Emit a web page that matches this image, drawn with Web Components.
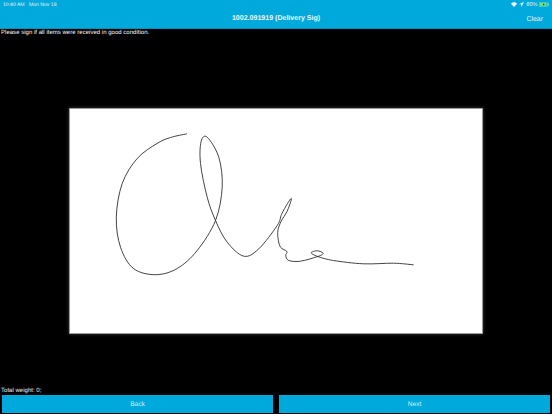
<!DOCTYPE html>
<html lang="en"><head><meta charset="utf-8"><title>Delivery Sig</title>
<style>html,body{margin:0;padding:0;background:#000}body{width:552px;height:414px;overflow:hidden;font-family:"Liberation Sans",Arial,sans-serif;text-rendering:geometricPrecision}</style>
</head><body>
<sig-screen title-text="1002.091919 (Delivery Sig)"></sig-screen>
<script>
class StatusBar extends HTMLElement{constructor(){super();this.attachShadow({mode:'open'}).innerHTML=`<style>
:host{display:flex;justify-content:space-between;align-items:center;height:9px;padding:0 3px 0 3px;font-size:5.1px;color:#e4f5fb}
.l{display:flex;gap:4.5px}.r{display:flex;align-items:center;gap:1.5px}svg{display:block}
</style><div class="l"><span>10:40 AM</span><span>Mon Nov 18</span></div>
<div class="r">
<svg width="6" height="5" viewBox="0 0 12 10"><path d="M0 3.4a8.6 8.6 0 0 1 12 0L6 10z" fill="#fff"/></svg>
<svg width="5" height="5" viewBox="0 0 10 10"><path d="M10 0L0 4.6h4.8V10z" fill="#fff"/></svg>
<span style="margin-left:1px;font-size:5.6px">80%</span>
<svg width="10" height="5" viewBox="0 0 20 10"><rect x=".5" y=".5" width="17" height="9" rx="2" fill="none" stroke="#bfe9d0"/><rect x="2" y="2" width="13" height="6" fill="#6fe36b"/><rect x="18.5" y="3" width="1.5" height="4" fill="#bfe9d0"/><path d="M9.5 2.2L7.5 5.5h2l-.6 2.3 2.4-3.4H9.3z" fill="#123"/></svg>
</div>`}}
customElements.define('status-bar',StatusBar);

class NavBar extends HTMLElement{constructor(){super();this.attachShadow({mode:'open'}).innerHTML=`<style>
:host{display:grid;grid-template-columns:1fr auto 1fr;align-items:center;height:19px;color:#fff;font-size:7.05px}
.t{font-weight:700;color:#eef9fd}.a{justify-self:end;padding:1px 9px 0 0;color:#e2f5fb;font-size:6.9px}
</style><span></span><span class="t"><slot></slot></span><span class="a"><slot name="action"></slot></span>`}}
customElements.define('nav-bar',NavBar);

class AppHeader extends HTMLElement{constructor(){super();this.attachShadow({mode:'open'}).innerHTML=`<style>
:host{display:block;background:#00a9dc;height:28px;border-bottom:1px solid #0091bd}
</style><slot></slot>`}}
customElements.define('app-header',AppHeader);

class SignaturePad extends HTMLElement{constructor(){super();
const p=[[186,133.4],[170,137],[156.5,143],[136.7,158],[121.7,183],[115.8,216.7],[120,246.7],[133,268],[155,274.2],[176.7,268],[196.7,250],[215,220],[221.7,186.7],[218.3,156.7],[206.7,136.7],[200.6,141],[200,163],[206.7,196.7],[215,220],[226.7,241.7],[243.3,255.7],[258.3,248.3],[276.7,225],[281,214],[287,203],[290.6,198],[290.3,201],[286.5,211],[280.5,221],[277.4,230],[277.6,238],[280,246.7],[286.4,251],[285.2,255],[288.3,260],[300,260.7],[317.3,256],[322.7,252.7],[316.7,250.3],[310.7,252.3],[317.3,256],[333,260],[363,263.3],[393,262.7],[412.7,264.3]];
let d=`M${p[0]}`;
for(let i=0;i<p.length-1;i++){const a=p[i-1]||p[i],b=p[i],c=p[i+1],e=p[i+2]||c;
d+=`C${(b[0]+(c[0]-a[0])/6).toFixed(1)} ${(b[1]+(c[1]-a[1])/6).toFixed(1)} ${(c[0]-(e[0]-b[0])/6).toFixed(1)} ${(c[1]-(e[1]-b[1])/6).toFixed(1)} ${c[0]} ${c[1]}`}
this.attachShadow({mode:'open'}).innerHTML=`<style>
:host{display:block;width:411.5px;height:224px;background:#fff;border:.5px solid #999;box-shadow:0 0 3px rgba(255,255,255,.25)}
svg{display:block;width:100%;height:100%}
</style><svg viewBox="69.5 108.5 411.5 224" preserveAspectRatio="none"><path d="${d}" fill="none" stroke="#222" stroke-width=".85" stroke-linecap="round" stroke-linejoin="round"/></svg>`}}
customElements.define('signature-pad',SignaturePad);

class ActionButton extends HTMLElement{constructor(){super();this.attachShadow({mode:'open'}).innerHTML=`<style>
:host{display:flex;align-items:center;justify-content:center;flex:1;height:18px;background:#00a9dc;color:#d4f0f9;font-size:6.6px;cursor:pointer}
</style><slot></slot>`}}
customElements.define('action-button',ActionButton);

class SigScreen extends HTMLElement{constructor(){super();this.attachShadow({mode:'open'}).innerHTML=`<style>
:host{display:flex;flex-direction:column;width:552px;height:414px;background:#000;color:#fff;font-size:6.05px}
.msg{height:9px;line-height:9px;padding-left:1px;color:#f4f4f4}
.mid{flex:1;display:flex;align-items:center;justify-content:center;padding-top:18px}
.w{height:9px;line-height:11px;padding-left:1px;color:#eee}
.bar{display:flex;gap:6px;padding:0 2px 1px}
</style>
<app-header><status-bar></status-bar><nav-bar>${this.getAttribute('title-text')||'1002.091919 (Delivery Sig)'}<span slot="action">Clear</span></nav-bar></app-header>
<div class="msg">Please sign if all items were received in good condition.</div>
<div class="mid"><signature-pad></signature-pad></div>
<div class="w">Total weight: 0;</div>
<div class="bar"><action-button>Back</action-button><action-button>Next</action-button></div>`}}
customElements.define('sig-screen',SigScreen);
</script>
</body></html>
